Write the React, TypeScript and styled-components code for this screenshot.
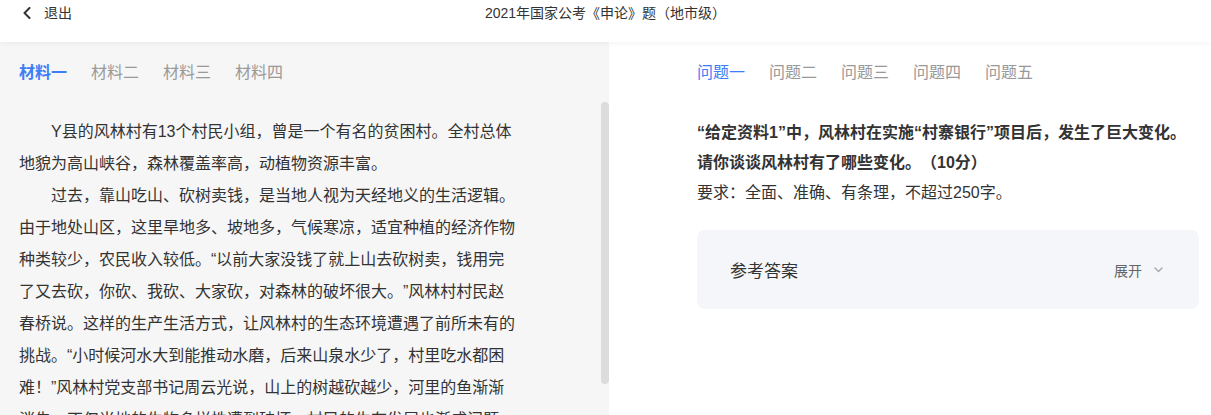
import React from "react";
import styled, { createGlobalStyle } from "styled-components";

const GlobalStyle = createGlobalStyle`
  html, body { margin: 0; padding: 0; background: #ffffff; }
  body {
    font-family: "Liberation Sans", "Noto Sans CJK SC", sans-serif;
    color: #333333;
    text-spacing-trim: space-all;
  }
  * { box-sizing: border-box; }
`;

const Page = styled.div`
  width: 1211px;
  height: 415px;
  display: flex;
  flex-direction: column;
  overflow: hidden;
`;

const Header = styled.header`
  position: relative;
  z-index: 2;
  height: 42px;
  flex: none;
  display: flex;
  align-items: flex-start;
  padding: 3px 0 0 22px;
  background: #ffffff;
  box-shadow: 0 2px 5px rgba(0, 0, 0, 0.045);
`;

const Back = styled.div`
  display: flex;
  align-items: center;
  gap: 12px;
  height: 20px;
  font-size: 14px;
  line-height: 20px;
  color: #333;
`;

const Title = styled.div`
  position: absolute;
  left: 0;
  right: 0;
  top: 3px;
  text-align: center;
  font-size: 14px;
  line-height: 20px;
  color: #333;
  pointer-events: none;
`;

const Main = styled.div`
  flex: 1;
  display: flex;
  min-height: 0;
`;

const LeftPanel = styled.section`
  position: relative;
  width: 609px;
  flex: none;
  background: #f6f6f6;
  padding: 20px 0 0 19px;
`;

const RightPanel = styled.section`
  flex: 1;
  background: #ffffff;
  padding: 20px 0 0 88px;
`;

const Tabs = styled.nav`
  display: flex;
  gap: 24px;
`;

const Tab = styled.span<{ $active?: boolean; $bold?: boolean }>`
  font-size: 16px;
  line-height: 22px;
  color: ${(p) => (p.$active ? "#3d7ef6" : "#999999")};
  font-weight: ${(p) => (p.$active && p.$bold ? 700 : 400)};
`;

const Article = styled.div`
  width: 498px;
  margin-top: 32px;
`;

const Para = styled.p`
  margin: 0;
  font-size: 16px;
  line-height: 32px;
  text-indent: 2em;
  color: #333;
  text-spacing-trim: space-all;
`;

const ScrollThumb = styled.div`
  position: absolute;
  right: 0;
  top: 60px;
  width: 8px;
  height: 282px;
  border-radius: 4px;
  background: #dcdcdc;
`;

const Question = styled.div`
  width: 502px;
  margin-top: 34px;
`;

const Ask = styled.p`
  margin: 0;
  font-size: 16px;
  line-height: 30px;
  font-weight: 700;
  color: #333;
`;

const Require = styled.p`
  margin: 0;
  font-size: 16px;
  line-height: 30px;
  color: #333;
`;

const AnswerCard = styled.div`
  margin-top: 22px;
  width: 502px;
  height: 79px;
  border-radius: 8px;
  background: #f5f6f9;
  display: flex;
  align-items: center;
  justify-content: space-between;
  padding: 0 36px 0 33px;
`;

const AnswerTitle = styled.span`
  font-size: 17px;
  color: #333;
`;

const Toggle = styled.span`
  display: flex;
  align-items: center;
  gap: 12px;
  font-size: 14px;
  color: #666;
`;

const ChevronLeft = () => (
  <svg width="10" height="12" viewBox="0 0 10 12" fill="none">
    <path d="M7.5 1 L2.5 6 L7.5 11" stroke="#333" strokeWidth="2" strokeLinecap="round" strokeLinejoin="round" />
  </svg>
);

const ChevronDown = () => (
  <svg width="9" height="6" viewBox="0 0 9 6" fill="none">
    <path d="M1 1 L4.5 4.5 L8 1" stroke="#a8a8a8" strokeWidth="1.4" strokeLinecap="round" strokeLinejoin="round" />
  </svg>
);

const materials = ["材料一", "材料二", "材料三", "材料四"];
const questions = ["问题一", "问题二", "问题三", "问题四", "问题五"];

export default function App() {
  return (
    <>
      <GlobalStyle />
      <Page>
        <Header>
          <Back>
            <ChevronLeft />
            <span>退出</span>
          </Back>
          <Title>2021年国家公考《申论》题（地市级）</Title>
        </Header>
        <Main>
          <LeftPanel>
            <Tabs>
              {materials.map((m, i) => (
                <Tab key={m} $active={i === 0} $bold>
                  {m}
                </Tab>
              ))}
            </Tabs>
            <Article>
              <Para>
                Y县的风林村有13个村民小组，曾是一个有名的贫困村。全村总体地貌为高山峡谷，森林覆盖率高，动植物资源丰富。
              </Para>
              <Para>
                过去，靠山吃山、砍树卖钱，是当地人视为天经地义的生活逻辑。由于地处山区，这里旱地多、坡地多，气候寒凉，适宜种植的经济作物种类较少，农民收入较低。“以前大家没钱了就上山去砍树卖，钱用完了又去砍，你砍、我砍、大家砍，对森林的破坏很大。”风林村村民赵春桥说。这样的生产生活方式，让风林村的生态环境遭遇了前所未有的挑战。“小时候河水大到能推动水磨，后来山泉水少了，村里吃水都困难！”风林村党支部书记周云光说，山上的树越砍越少，河里的鱼渐渐消失，不仅当地的生物多样性遭到破坏，村民的生存发展也渐成问题。
              </Para>
            </Article>
            <ScrollThumb />
          </LeftPanel>
          <RightPanel>
            <Tabs>
              {questions.map((q, i) => (
                <Tab key={q} $active={i === 0}>
                  {q}
                </Tab>
              ))}
            </Tabs>
            <Question>
              <Ask>
                “给定资料1”中，风林村在实施“村寨银行”项目后，发生了巨大变化。请你谈谈风林村有了哪些变化。（10分）
              </Ask>
              <Require>要求：全面、准确、有条理，不超过250字。</Require>
            </Question>
            <AnswerCard>
              <AnswerTitle>参考答案</AnswerTitle>
              <Toggle>
                展开
                <ChevronDown />
              </Toggle>
            </AnswerCard>
          </RightPanel>
        </Main>
      </Page>
    </>
  );
}
